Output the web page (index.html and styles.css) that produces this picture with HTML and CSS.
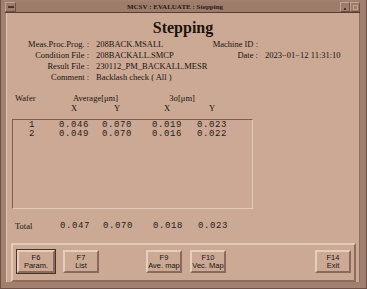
FILE: index.html
```html
<!DOCTYPE html>
<html lang="en">
<head>
    <meta charset="UTF-8">
    <title>MCSV : EVALUATE : Stepping</title>
    <link rel="stylesheet" href="styles.css">
</head>
<body>
    <div class="window">
        <div class="titlebar">
            <div class="tb-btn menu"><span class="dash"></span></div>
            <div class="tb-title">MCSV : EVALUATE : Stepping</div>
            <div class="tb-btn small"><span class="dot"></span></div>
            <div class="tb-btn small"><span class="sq"></span></div>
        </div>
        <div class="client">
            <h1>Stepping</h1>

            <div class="info">
                <span class="lbl">Meas.Proc.Prog. :</span>
                <span class="val">208BACK.MSALL</span>
                <span class="lbl">Machine ID :</span>
                <span class="val"></span>

                <span class="lbl">Condition File :</span>
                <span class="val">208BACKALL.SMCP</span>
                <span class="lbl">Date :</span>
                <span class="val">2023−01−12 11:31:10</span>

                <span class="lbl">Result File :</span>
                <span class="val wide">230112_PM_BACKALL.MESR</span>

                <span class="lbl">Comment :</span>
                <span class="val wide">Backlash check ( All )</span>
            </div>

            <div class="cols head first">
                <span class="c-wafer">Wafer</span>
                <span class="span2">Average[μm]</span>
                <span class="span2 sigma">3σ[μm]</span>
            </div>
            <div class="cols head">
                <span></span>
                <span class="axis">X</span>
                <span class="axis">Y</span>
                <span class="axis">X</span>
                <span class="axis">Y</span>
            </div>

            <div class="list">
                <div class="cols row">
                    <span class="num">1</span>
                    <span>0.046</span><span>0.070</span><span>0.019</span><span>0.023</span>
                </div>
                <div class="cols row">
                    <span class="num">2</span>
                    <span>0.049</span><span>0.070</span><span>0.016</span><span>0.022</span>
                </div>
            </div>

            <div class="cols total">
                <span class="c-wafer">Total</span>
                <span class="mono">0.047</span><span class="mono">0.070</span><span class="mono">0.018</span><span class="mono">0.023</span>
            </div>

            <div class="buttons">
                <button class="fkey focus">F6<br>Param.</button>
                <button class="fkey gap-s">F7<br>List</button>
                <button class="fkey gap-m">F9<br>Ave. map</button>
                <button class="fkey gap-s">F10<br>Vec. Map</button>
                <button class="fkey gap-l">F14<br>Exit</button>
            </div>
        </div>
    </div>
</body>
</html>
```

FILE: styles.css
```css
* {
    box-sizing: border-box;
}
body {
    margin: 0;
    background: #8c6b5b;
    font-family: "Liberation Serif", serif;
    font-size: 8px;
    color: #1a1410;
}
.window {
    width: 367px;
    height: 289px;
    padding: 2px 6px 6px 5px;
    background: #a2806f;
    border-left: 1px solid #6e5044;
    border-right: 1px solid #6e5044;
    border-bottom: 1px solid #6e5044;
    display: flex;
    flex-direction: column;
}
.titlebar {
    height: 12px;
    display: flex;
    align-items: stretch;
    background: #9d7c6b;
    border-bottom: 1px solid #5a3c30;
    margin-left: -1px;
}
.tb-btn {
    border: 1px solid;
    border-color: #c3a391 #6f5244 #6f5244 #c3a391;
    display: flex;
    align-items: center;
    justify-content: center;
}
.tb-btn.menu {
    width: 11px;
}
.tb-btn.small {
    width: 10px;
}
.dash {
    width: 6px;
    height: 2px;
    background: #4e362b;
}
.dot {
    width: 2px;
    height: 2px;
    background: #4e362b;
    margin-top: 3px;
}
.sq {
    width: 5px;
    height: 5px;
    border: 1px solid #c3a391;
}
.tb-title {
    flex: 1;
    text-align: center;
    font-size: 7px;
    font-weight: bold;
    line-height: 10px;
    color: #2a1a14;
    padding-right: 6px;
}
.client {
    flex: 1;
    background: #cba994;
    border-left: 1px solid #e0c5b3;
    border-right: 1px solid #8f6f60;
    display: flex;
    flex-direction: column;
}
h1 {
    margin: 6px 0 0;
    font-size: 16px;
    line-height: 17px;
    text-align: center;
    font-weight: bold;
}
.info {
    margin: 3px 0 0 20px;
    display: grid;
    grid-template-columns: 62px 106px 49px auto;
    column-gap: 7px;
    line-height: 11px;
    font-size: 8.5px;
}
.lbl {
    text-align: right;
    white-space: nowrap;
}
.val {
    white-space: nowrap;
}
.val.wide {
    grid-column: span 3;
}
.cols {
    display: grid;
    grid-template-columns: 47px 43px 50px 45px 45px;
    margin-left: 5px;
}
.head {
    line-height: 9px;
    font-size: 8.5px;
}
.head.first {
    margin-top: 11px;
    margin-bottom: 1px;
}
.c-wafer {
    padding-left: 3px;
}
.span2 {
    grid-column: span 2;
    text-align: center;
    padding-right: 20px;
}
.span2.sigma {
    padding-right: 30px;
}
.axis {
    padding-left: 12px;
}
.list {
    margin: 6px 0 0 5px;
    width: 241px;
    height: 90px;
    border: 1px solid;
    border-color: #7c5e50 #e3c9b7 #e3c9b7 #7c5e50;
    padding-top: 1px;
}
.list .cols {
    margin-left: -1px;
}
.row,
.mono {
    font-family: "Liberation Mono", monospace;
    font-size: 9px;
    letter-spacing: 0.6px;
    line-height: 9px;
    color: #2a201a;
}
.num {
    padding-left: 17px;
}
.total {
    margin-top: 12px;
    line-height: 10px;
    font-size: 8.5px;
}
.total .mono {
    padding-left: 1px;
    line-height: 10px;
}
.buttons {
    margin: 12px 3px 0 4px;
    height: 39px;
    border: 2px solid;
    border-color: #e4cab8 #8c6c5d #8c6c5d #e4cab8;
    display: flex;
    align-items: flex-start;
    padding: 5px 0 0 4px;
}
.fkey {
    width: 36px;
    height: 23px;
    padding: 0;
    background: #cba994;
    border: 2px solid;
    border-color: #e6cdbc #8a6a5b #8a6a5b #e6cdbc;
    font-family: "Liberation Sans", sans-serif;
    font-size: 7.5px;
    line-height: 8px;
    white-space: nowrap;
    color: #1a1410;
}
.fkey.focus {
    width: 38px;
    outline: 1px solid #4a3228;
}
.gap-s {
    margin-left: 8px;
}
.gap-m {
    margin-left: 47px;
}
.gap-l {
    margin-left: 89px;
}
```
